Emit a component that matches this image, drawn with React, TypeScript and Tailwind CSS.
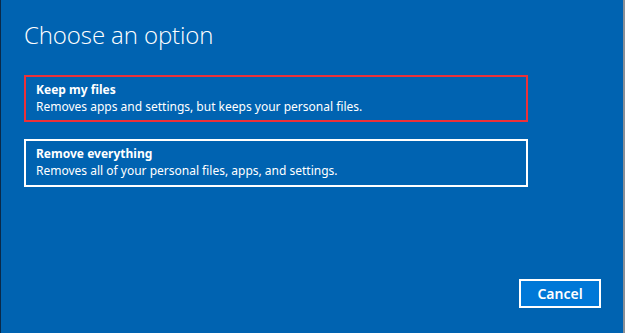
import React from "react";

export default function App() {
  return (
    <div
      className="w-[625px] h-[333px] flex bg-[#0063b1] text-white"
      style={{ fontFamily: '"Noto Sans", "Open Sans", sans-serif' }}
    >
      <div className="w-[1px] bg-[#0a2a4a]" />
      <div className="flex-1 flex flex-col pl-[23px] pr-[95px]">
        <h1
          className="mt-[20px] text-[24px] leading-[29px] font-light tracking-[-0.1px]"
          style={{ fontFamily: '"Open Sans", "Noto Sans", sans-serif' }}
        >
          Choose an option
        </h1>
        <div className="mt-[26px] flex flex-col gap-[17px]">
          <div className="h-[47px] border-2 border-[#ec3139] px-[10px] pt-[5px] flex flex-col">
            <span className="text-[12px] leading-[16px] font-bold">Keep my files</span>
            <span className="text-[12px] leading-[16px] mt-[1px]">
              Removes apps and settings, but keeps your personal files.
            </span>
          </div>
          <div className="h-[48px] border-2 border-white px-[10px] pt-[5px] flex flex-col">
            <span className="text-[12px] leading-[16px] font-bold">Remove everything</span>
            <span className="text-[12px] leading-[16px] mt-[1px]">
              Removes all of your personal files, apps, and settings.
            </span>
          </div>
        </div>
        <div className="flex-1" />
        <div className="flex justify-end mb-[25px] -mr-[73px]">
          <button className="w-[82px] h-[29px] border-2 border-white bg-[#0078d7] text-[14px] font-semibold leading-none">
            Cancel
          </button>
        </div>
      </div>
      <div className="w-[2px] bg-[#8a8f96]" />
    </div>
  );
}
